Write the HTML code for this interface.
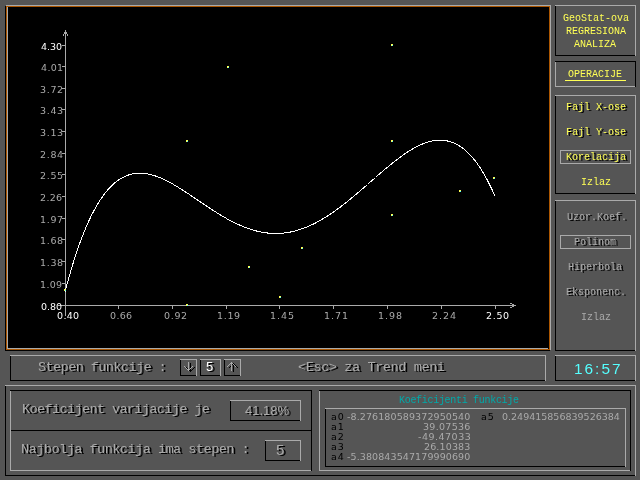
<!DOCTYPE html>
<html><head><meta charset="utf-8"><title>GeoStat - Regresiona analiza</title>
<style>
html,body{margin:0;padding:0}
body{width:640px;height:480px;background:#555555;position:relative;overflow:hidden}
.l{position:absolute;box-sizing:content-box}
.t{position:absolute;white-space:pre;line-height:1;margin:0;padding:0;will-change:transform}
svg{position:absolute;left:0;top:0}
.s{font-family:"Liberation Mono", monospace;font-size:10px;font-weight:normal}
.sf{font-family:"Liberation Mono", monospace;font-size:10px;font-weight:normal}
.n{font-family:"DejaVu Sans", "Liberation Sans", sans-serif;font-size:9.5px;font-weight:normal}
.m{font-family:"Liberation Mono", monospace;font-size:13.6px;font-weight:normal}
.mn{font-family:"Liberation Sans", sans-serif;font-size:13px;font-weight:normal}
.b{font-family:"Liberation Sans", sans-serif;font-size:15px;font-weight:normal}
.c{font-family:"Liberation Sans", sans-serif;font-size:15.4px;font-weight:normal}
</style></head>
<body>
<div class="g" id="graph-panel">
<div class="l" style="left:5px;top:5px;width:546px;height:346px;background:#000"></div>
<div class="l" style="left:6px;top:5px;width:545px;height:1px;background:#aaaaaa"></div>
<div class="l" style="left:550px;top:6px;width:1px;height:344px;background:#aaaaaa"></div>
<div class="l" style="left:5px;top:5px;width:1px;height:1px;background:#555555"></div>
<div class="l" style="left:550px;top:350px;width:1px;height:1px;background:#555555"></div>
<div class="l" style="left:6px;top:6px;width:542px;height:342px;border:1px solid #aa5500"></div>
<div class="l" style="left:7px;top:7px;width:1px;height:342px;background:#aaaaaa"></div>
<div class="l" style="left:8px;top:348px;width:540px;height:1px;background:#aaaaaa"></div>
<svg width="640" height="480" viewBox="0 0 640 480" shape-rendering="crispEdges">
<line x1="65.5" y1="30.5" x2="65.5" y2="315.5" stroke="#aaaaaa" stroke-width="1" stroke-linecap="square"/>
<line x1="58.5" y1="305.5" x2="515.5" y2="305.5" stroke="#aaaaaa" stroke-width="1" stroke-linecap="square"/>
<line x1="65.5" y1="30.5" x2="63.5" y2="35.5" stroke="#aaaaaa" stroke-width="1" stroke-linecap="square"/>
<line x1="65.5" y1="30.5" x2="67.5" y2="35.5" stroke="#aaaaaa" stroke-width="1" stroke-linecap="square"/>
<line x1="515.5" y1="305.5" x2="510.5" y2="303.5" stroke="#aaaaaa" stroke-width="1" stroke-linecap="square"/>
<line x1="515.5" y1="305.5" x2="510.5" y2="307.5" stroke="#aaaaaa" stroke-width="1" stroke-linecap="square"/>
<line x1="65.5" y1="305.5" x2="65.5" y2="308.5" stroke="#aaaaaa" stroke-width="1" stroke-linecap="square"/>
<line x1="118.5" y1="305.5" x2="118.5" y2="308.5" stroke="#aaaaaa" stroke-width="1" stroke-linecap="square"/>
<line x1="172.5" y1="305.5" x2="172.5" y2="308.5" stroke="#aaaaaa" stroke-width="1" stroke-linecap="square"/>
<line x1="226.5" y1="305.5" x2="226.5" y2="308.5" stroke="#aaaaaa" stroke-width="1" stroke-linecap="square"/>
<line x1="279.5" y1="305.5" x2="279.5" y2="308.5" stroke="#aaaaaa" stroke-width="1" stroke-linecap="square"/>
<line x1="333.5" y1="305.5" x2="333.5" y2="308.5" stroke="#aaaaaa" stroke-width="1" stroke-linecap="square"/>
<line x1="387.5" y1="305.5" x2="387.5" y2="308.5" stroke="#aaaaaa" stroke-width="1" stroke-linecap="square"/>
<line x1="441.5" y1="305.5" x2="441.5" y2="308.5" stroke="#aaaaaa" stroke-width="1" stroke-linecap="square"/>
<line x1="495.5" y1="305.5" x2="495.5" y2="308.5" stroke="#aaaaaa" stroke-width="1" stroke-linecap="square"/>
<line x1="62.5" y1="45.5" x2="65.5" y2="45.5" stroke="#aaaaaa" stroke-width="1" stroke-linecap="square"/>
<line x1="62.5" y1="66.5" x2="65.5" y2="66.5" stroke="#aaaaaa" stroke-width="1" stroke-linecap="square"/>
<line x1="62.5" y1="88.5" x2="65.5" y2="88.5" stroke="#aaaaaa" stroke-width="1" stroke-linecap="square"/>
<line x1="62.5" y1="109.5" x2="65.5" y2="109.5" stroke="#aaaaaa" stroke-width="1" stroke-linecap="square"/>
<line x1="62.5" y1="131.5" x2="65.5" y2="131.5" stroke="#aaaaaa" stroke-width="1" stroke-linecap="square"/>
<line x1="62.5" y1="153.5" x2="65.5" y2="153.5" stroke="#aaaaaa" stroke-width="1" stroke-linecap="square"/>
<line x1="62.5" y1="174.5" x2="65.5" y2="174.5" stroke="#aaaaaa" stroke-width="1" stroke-linecap="square"/>
<line x1="62.5" y1="196.5" x2="65.5" y2="196.5" stroke="#aaaaaa" stroke-width="1" stroke-linecap="square"/>
<line x1="62.5" y1="218.5" x2="65.5" y2="218.5" stroke="#aaaaaa" stroke-width="1" stroke-linecap="square"/>
<line x1="62.5" y1="239.5" x2="65.5" y2="239.5" stroke="#aaaaaa" stroke-width="1" stroke-linecap="square"/>
<line x1="62.5" y1="261.5" x2="65.5" y2="261.5" stroke="#aaaaaa" stroke-width="1" stroke-linecap="square"/>
<line x1="62.5" y1="283.5" x2="65.5" y2="283.5" stroke="#aaaaaa" stroke-width="1" stroke-linecap="square"/>
<line x1="62.5" y1="305.5" x2="65.5" y2="305.5" stroke="#aaaaaa" stroke-width="1" stroke-linecap="square"/>
<polyline points="65.0,292.1 65.5,290.1 66.0,288.2 66.5,286.3 67.0,284.5 67.5,282.6 68.0,280.8 68.5,279.0 69.0,277.2 69.5,275.4 70.0,273.7 70.5,272.0 71.0,270.3 71.5,268.6 72.0,266.9 72.5,265.2 73.0,263.6 73.5,262.0 74.0,260.4 74.5,258.8 75.0,257.3 75.5,255.7 76.0,254.2 76.5,252.7 77.0,251.2 77.5,249.7 78.0,248.3 78.5,246.8 79.0,245.4 79.5,244.0 80.0,242.6 80.5,241.3 81.0,239.9 81.5,238.6 82.0,237.3 82.5,236.0 83.0,234.7 83.5,233.4 84.0,232.2 84.5,231.0 85.0,229.7 85.5,228.5 86.0,227.4 86.5,226.2 87.0,225.0 87.5,223.9 88.0,222.8 88.5,221.7 89.0,220.6 89.5,219.5 90.0,218.5 90.5,217.4 91.0,216.4 91.5,215.4 92.0,214.4 92.5,213.4 93.0,212.4 93.5,211.5 94.0,210.5 94.5,209.6 95.0,208.7 95.5,207.8 96.0,206.9 96.5,206.0 97.0,205.2 97.5,204.3 98.0,203.5 98.5,202.7 99.0,201.9 99.5,201.1 100.0,200.3 100.5,199.6 101.0,198.8 101.5,198.1 102.0,197.4 102.5,196.6 103.0,195.9 103.5,195.3 104.0,194.6 104.5,193.9 105.0,193.3 105.5,192.6 106.0,192.0 106.5,191.4 107.0,190.8 107.5,190.2 108.0,189.6 108.5,189.1 109.0,188.5 109.5,188.0 110.0,187.4 110.5,186.9 111.0,186.4 111.5,185.9 112.0,185.4 112.5,185.0 113.0,184.5 113.5,184.0 114.0,183.6 114.5,183.2 115.0,182.7 115.5,182.3 116.0,181.9 116.5,181.5 117.0,181.2 117.5,180.8 118.0,180.4 118.5,180.1 119.0,179.7 119.5,179.4 120.0,179.1 120.5,178.8 121.0,178.5 121.5,178.2 122.0,177.9 122.5,177.6 123.0,177.3 123.5,177.1 124.0,176.8 124.5,176.6 125.0,176.4 125.5,176.2 126.0,175.9 126.5,175.7 127.0,175.5 127.5,175.4 128.0,175.2 128.5,175.0 129.0,174.8 129.5,174.7 130.0,174.5 130.5,174.4 131.0,174.3 131.5,174.2 132.0,174.0 132.5,173.9 133.0,173.8 133.5,173.7 134.0,173.7 134.5,173.6 135.0,173.5 135.5,173.4 136.0,173.4 136.5,173.3 137.0,173.3 137.5,173.3 138.0,173.2 138.5,173.2 139.0,173.2 139.5,173.2 140.0,173.2 140.5,173.2 141.0,173.2 141.5,173.2 142.0,173.3 142.5,173.3 143.0,173.3 143.5,173.4 144.0,173.4 144.5,173.5 145.0,173.5 145.5,173.6 146.0,173.7 146.5,173.7 147.0,173.8 147.5,173.9 148.0,174.0 148.5,174.1 149.0,174.2 149.5,174.3 150.0,174.4 150.5,174.6 151.0,174.7 151.5,174.8 152.0,174.9 152.5,175.1 153.0,175.2 153.5,175.4 154.0,175.5 154.5,175.7 155.0,175.9 155.5,176.0 156.0,176.2 156.5,176.4 157.0,176.6 157.5,176.7 158.0,176.9 158.5,177.1 159.0,177.3 159.5,177.5 160.0,177.7 160.5,177.9 161.0,178.1 161.5,178.4 162.0,178.6 162.5,178.8 163.0,179.0 163.5,179.3 164.0,179.5 164.5,179.7 165.0,180.0 165.5,180.2 166.0,180.4 166.5,180.7 167.0,181.0 167.5,181.2 168.0,181.5 168.5,181.7 169.0,182.0 169.5,182.3 170.0,182.5 170.5,182.8 171.0,183.1 171.5,183.3 172.0,183.6 172.5,183.9 173.0,184.2 173.5,184.5 174.0,184.8 174.5,185.1 175.0,185.4 175.5,185.7 176.0,185.9 176.5,186.2 177.0,186.5 177.5,186.9 178.0,187.2 178.5,187.5 179.0,187.8 179.5,188.1 180.0,188.4 180.5,188.7 181.0,189.0 181.5,189.3 182.0,189.7 182.5,190.0 183.0,190.3 183.5,190.6 184.0,190.9 184.5,191.3 185.0,191.6 185.5,191.9 186.0,192.3 186.5,192.6 187.0,192.9 187.5,193.2 188.0,193.6 188.5,193.9 189.0,194.2 189.5,194.6 190.0,194.9 190.5,195.2 191.0,195.6 191.5,195.9 192.0,196.3 192.5,196.6 193.0,196.9 193.5,197.3 194.0,197.6 194.5,197.9 195.0,198.3 195.5,198.6 196.0,199.0 196.5,199.3 197.0,199.6 197.5,200.0 198.0,200.3 198.5,200.7 199.0,201.0 199.5,201.3 200.0,201.7 200.5,202.0 201.0,202.4 201.5,202.7 202.0,203.0 202.5,203.4 203.0,203.7 203.5,204.1 204.0,204.4 204.5,204.7 205.0,205.1 205.5,205.4 206.0,205.7 206.5,206.1 207.0,206.4 207.5,206.7 208.0,207.1 208.5,207.4 209.0,207.7 209.5,208.1 210.0,208.4 210.5,208.7 211.0,209.0 211.5,209.4 212.0,209.7 212.5,210.0 213.0,210.3 213.5,210.7 214.0,211.0 214.5,211.3 215.0,211.6 215.5,211.9 216.0,212.2 216.5,212.6 217.0,212.9 217.5,213.2 218.0,213.5 218.5,213.8 219.0,214.1 219.5,214.4 220.0,214.7 220.5,215.0 221.0,215.3 221.5,215.6 222.0,215.9 222.5,216.2 223.0,216.5 223.5,216.8 224.0,217.1 224.5,217.4 225.0,217.7 225.5,217.9 226.0,218.2 226.5,218.5 227.0,218.8 227.5,219.1 228.0,219.3 228.5,219.6 229.0,219.9 229.5,220.1 230.0,220.4 230.5,220.7 231.0,220.9 231.5,221.2 232.0,221.5 232.5,221.7 233.0,222.0 233.5,222.2 234.0,222.5 234.5,222.7 235.0,223.0 235.5,223.2 236.0,223.4 236.5,223.7 237.0,223.9 237.5,224.1 238.0,224.4 238.5,224.6 239.0,224.8 239.5,225.0 240.0,225.3 240.5,225.5 241.0,225.7 241.5,225.9 242.0,226.1 242.5,226.3 243.0,226.5 243.5,226.7 244.0,226.9 244.5,227.1 245.0,227.3 245.5,227.5 246.0,227.7 246.5,227.9 247.0,228.1 247.5,228.2 248.0,228.4 248.5,228.6 249.0,228.8 249.5,228.9 250.0,229.1 250.5,229.3 251.0,229.4 251.5,229.6 252.0,229.7 252.5,229.9 253.0,230.0 253.5,230.2 254.0,230.3 254.5,230.5 255.0,230.6 255.5,230.7 256.0,230.9 256.5,231.0 257.0,231.1 257.5,231.2 258.0,231.3 258.5,231.5 259.0,231.6 259.5,231.7 260.0,231.8 260.5,231.9 261.0,232.0 261.5,232.1 262.0,232.2 262.5,232.3 263.0,232.3 263.5,232.4 264.0,232.5 264.5,232.6 265.0,232.7 265.5,232.7 266.0,232.8 266.5,232.9 267.0,232.9 267.5,233.0 268.0,233.0 268.5,233.1 269.0,233.1 269.5,233.2 270.0,233.2 270.5,233.2 271.0,233.3 271.5,233.3 272.0,233.3 272.5,233.4 273.0,233.4 273.5,233.4 274.0,233.4 274.5,233.4 275.0,233.4 275.5,233.4 276.0,233.4 276.5,233.4 277.0,233.4 277.5,233.4 278.0,233.4 278.5,233.4 279.0,233.4 279.5,233.3 280.0,233.3 280.5,233.3 281.0,233.2 281.5,233.2 282.0,233.2 282.5,233.1 283.0,233.1 283.5,233.0 284.0,233.0 284.5,232.9 285.0,232.8 285.5,232.8 286.0,232.7 286.5,232.6 287.0,232.6 287.5,232.5 288.0,232.4 288.5,232.3 289.0,232.2 289.5,232.2 290.0,232.1 290.5,232.0 291.0,231.9 291.5,231.8 292.0,231.6 292.5,231.5 293.0,231.4 293.5,231.3 294.0,231.2 294.5,231.1 295.0,230.9 295.5,230.8 296.0,230.7 296.5,230.5 297.0,230.4 297.5,230.2 298.0,230.1 298.5,229.9 299.0,229.8 299.5,229.6 300.0,229.5 300.5,229.3 301.0,229.1 301.5,229.0 302.0,228.8 302.5,228.6 303.0,228.5 303.5,228.3 304.0,228.1 304.5,227.9 305.0,227.7 305.5,227.5 306.0,227.3 306.5,227.1 307.0,226.9 307.5,226.7 308.0,226.5 308.5,226.3 309.0,226.1 309.5,225.8 310.0,225.6 310.5,225.4 311.0,225.2 311.5,224.9 312.0,224.7 312.5,224.5 313.0,224.2 313.5,224.0 314.0,223.7 314.5,223.5 315.0,223.2 315.5,223.0 316.0,222.7 316.5,222.4 317.0,222.2 317.5,221.9 318.0,221.6 318.5,221.4 319.0,221.1 319.5,220.8 320.0,220.5 320.5,220.3 321.0,220.0 321.5,219.7 322.0,219.4 322.5,219.1 323.0,218.8 323.5,218.5 324.0,218.2 324.5,217.9 325.0,217.6 325.5,217.3 326.0,217.0 326.5,216.6 327.0,216.3 327.5,216.0 328.0,215.7 328.5,215.4 329.0,215.0 329.5,214.7 330.0,214.4 330.5,214.0 331.0,213.7 331.5,213.4 332.0,213.0 332.5,212.7 333.0,212.3 333.5,212.0 334.0,211.6 334.5,211.3 335.0,210.9 335.5,210.6 336.0,210.2 336.5,209.8 337.0,209.5 337.5,209.1 338.0,208.7 338.5,208.4 339.0,208.0 339.5,207.6 340.0,207.3 340.5,206.9 341.0,206.5 341.5,206.1 342.0,205.7 342.5,205.4 343.0,205.0 343.5,204.6 344.0,204.2 344.5,203.8 345.0,203.4 345.5,203.0 346.0,202.6 346.5,202.2 347.0,201.8 347.5,201.4 348.0,201.0 348.5,200.6 349.0,200.2 349.5,199.8 350.0,199.4 350.5,199.0 351.0,198.6 351.5,198.2 352.0,197.7 352.5,197.3 353.0,196.9 353.5,196.5 354.0,196.1 354.5,195.7 355.0,195.2 355.5,194.8 356.0,194.4 356.5,194.0 357.0,193.5 357.5,193.1 358.0,192.7 358.5,192.3 359.0,191.8 359.5,191.4 360.0,191.0 360.5,190.6 361.0,190.1 361.5,189.7 362.0,189.3 362.5,188.8 363.0,188.4 363.5,188.0 364.0,187.5 364.5,187.1 365.0,186.6 365.5,186.2 366.0,185.8 366.5,185.3 367.0,184.9 367.5,184.5 368.0,184.0 368.5,183.6 369.0,183.2 369.5,182.7 370.0,182.3 370.5,181.8 371.0,181.4 371.5,181.0 372.0,180.5 372.5,180.1 373.0,179.6 373.5,179.2 374.0,178.8 374.5,178.3 375.0,177.9 375.5,177.5 376.0,177.0 376.5,176.6 377.0,176.1 377.5,175.7 378.0,175.3 378.5,174.8 379.0,174.4 379.5,174.0 380.0,173.5 380.5,173.1 381.0,172.7 381.5,172.3 382.0,171.8 382.5,171.4 383.0,171.0 383.5,170.5 384.0,170.1 384.5,169.7 385.0,169.3 385.5,168.8 386.0,168.4 386.5,168.0 387.0,167.6 387.5,167.2 388.0,166.8 388.5,166.3 389.0,165.9 389.5,165.5 390.0,165.1 390.5,164.7 391.0,164.3 391.5,163.9 392.0,163.5 392.5,163.1 393.0,162.7 393.5,162.3 394.0,161.9 394.5,161.5 395.0,161.1 395.5,160.7 396.0,160.3 396.5,159.9 397.0,159.6 397.5,159.2 398.0,158.8 398.5,158.4 399.0,158.0 399.5,157.7 400.0,157.3 400.5,156.9 401.0,156.6 401.5,156.2 402.0,155.8 402.5,155.5 403.0,155.1 403.5,154.8 404.0,154.4 404.5,154.1 405.0,153.8 405.5,153.4 406.0,153.1 406.5,152.7 407.0,152.4 407.5,152.1 408.0,151.8 408.5,151.4 409.0,151.1 409.5,150.8 410.0,150.5 410.5,150.2 411.0,149.9 411.5,149.6 412.0,149.3 412.5,149.0 413.0,148.7 413.5,148.4 414.0,148.1 414.5,147.9 415.0,147.6 415.5,147.3 416.0,147.1 416.5,146.8 417.0,146.5 417.5,146.3 418.0,146.0 418.5,145.8 419.0,145.5 419.5,145.3 420.0,145.1 420.5,144.9 421.0,144.6 421.5,144.4 422.0,144.2 422.5,144.0 423.0,143.8 423.5,143.6 424.0,143.4 424.5,143.2 425.0,143.0 425.5,142.9 426.0,142.7 426.5,142.5 427.0,142.3 427.5,142.2 428.0,142.0 428.5,141.9 429.0,141.8 429.5,141.6 430.0,141.5 430.5,141.4 431.0,141.2 431.5,141.1 432.0,141.0 432.5,140.9 433.0,140.8 433.5,140.7 434.0,140.7 434.5,140.6 435.0,140.5 435.5,140.5 436.0,140.4 436.5,140.3 437.0,140.3 437.5,140.3 438.0,140.2 438.5,140.2 439.0,140.2 439.5,140.2 440.0,140.2 440.5,140.2 441.0,140.2 441.5,140.2 442.0,140.2 442.5,140.3 443.0,140.3 443.5,140.3 444.0,140.4 444.5,140.4 445.0,140.5 445.5,140.6 446.0,140.7 446.5,140.8 447.0,140.9 447.5,141.0 448.0,141.1 448.5,141.2 449.0,141.3 449.5,141.5 450.0,141.6 450.5,141.8 451.0,141.9 451.5,142.1 452.0,142.3 452.5,142.5 453.0,142.7 453.5,142.9 454.0,143.1 454.5,143.3 455.0,143.5 455.5,143.8 456.0,144.0 456.5,144.3 457.0,144.5 457.5,144.8 458.0,145.1 458.5,145.4 459.0,145.7 459.5,146.0 460.0,146.3 460.5,146.6 461.0,147.0 461.5,147.3 462.0,147.7 462.5,148.1 463.0,148.4 463.5,148.8 464.0,149.2 464.5,149.6 465.0,150.0 465.5,150.5 466.0,150.9 466.5,151.4 467.0,151.8 467.5,152.3 468.0,152.8 468.5,153.3 469.0,153.8 469.5,154.3 470.0,154.8 470.5,155.3 471.0,155.9 471.5,156.4 472.0,157.0 472.5,157.6 473.0,158.2 473.5,158.8 474.0,159.4 474.5,160.0 475.0,160.6 475.5,161.3 476.0,161.9 476.5,162.6 477.0,163.3 477.5,164.0 478.0,164.7 478.5,165.4 479.0,166.1 479.5,166.9 480.0,167.6 480.5,168.4 481.0,169.2 481.5,170.0 482.0,170.8 482.5,171.6 483.0,172.4 483.5,173.3 484.0,174.1 484.5,175.0 485.0,175.9 485.5,176.8 486.0,177.7 486.5,178.6 487.0,179.5 487.5,180.5 488.0,181.4 488.5,182.4 489.0,183.4 489.5,184.4 490.0,185.4 490.5,186.4 491.0,187.5 491.5,188.5 492.0,189.6 492.5,190.7 493.0,191.8 493.5,192.9 494.0,194.0 494.5,195.2 495.0,196.3" fill="none" stroke="#ffffff" stroke-width="1"/>
<rect x="227" y="66" width="2" height="2" fill="#ffff55"/><rect x="228" y="67" width="1" height="1" fill="#55ffff"/>
<rect x="186" y="140" width="2" height="2" fill="#ffff55"/><rect x="187" y="141" width="1" height="1" fill="#55ffff"/>
<rect x="391" y="44" width="2" height="2" fill="#ffff55"/><rect x="392" y="45" width="1" height="1" fill="#55ffff"/>
<rect x="391" y="140" width="2" height="2" fill="#ffff55"/><rect x="392" y="141" width="1" height="1" fill="#55ffff"/>
<rect x="391" y="214" width="2" height="2" fill="#ffff55"/><rect x="392" y="215" width="1" height="1" fill="#55ffff"/>
<rect x="459" y="190" width="2" height="2" fill="#ffff55"/><rect x="460" y="191" width="1" height="1" fill="#55ffff"/>
<rect x="493" y="177" width="2" height="2" fill="#ffff55"/><rect x="494" y="178" width="1" height="1" fill="#55ffff"/>
<rect x="301" y="247" width="2" height="2" fill="#ffff55"/><rect x="302" y="248" width="1" height="1" fill="#55ffff"/>
<rect x="248" y="266" width="2" height="2" fill="#ffff55"/><rect x="249" y="267" width="1" height="1" fill="#55ffff"/>
<rect x="279" y="296" width="2" height="2" fill="#ffff55"/><rect x="280" y="297" width="1" height="1" fill="#55ffff"/>
<rect x="186" y="304" width="2" height="2" fill="#ffff55"/><rect x="187" y="305" width="1" height="1" fill="#55ffff"/>
<rect x="64" y="289" width="2" height="2" fill="#ffff55"/><rect x="65" y="290" width="1" height="1" fill="#55ffff"/>
</svg>
<div class="t n" style="left:41px;top:42px;color:#ffffff">4.30</div>
<div class="t n" style="left:41px;top:63px;color:#aaaaaa;letter-spacing:0.333px">4.01</div>
<div class="t n" style="left:40px;top:85px;color:#aaaaaa;letter-spacing:0.667px">3.72</div>
<div class="t n" style="left:40px;top:106px;color:#aaaaaa;letter-spacing:0.667px">3.43</div>
<div class="t n" style="left:40px;top:128px;color:#aaaaaa;letter-spacing:0.667px">3.13</div>
<div class="t n" style="left:40px;top:150px;color:#aaaaaa;letter-spacing:0.667px">2.84</div>
<div class="t n" style="left:40px;top:171px;color:#aaaaaa;letter-spacing:0.667px">2.55</div>
<div class="t n" style="left:40px;top:193px;color:#aaaaaa;letter-spacing:0.333px">2.26</div>
<div class="t n" style="left:40px;top:215px;color:#aaaaaa;letter-spacing:0.667px">1.97</div>
<div class="t n" style="left:40px;top:236px;color:#aaaaaa;letter-spacing:0.667px">1.68</div>
<div class="t n" style="left:40px;top:258px;color:#aaaaaa;letter-spacing:0.667px">1.38</div>
<div class="t n" style="left:40px;top:280px;color:#aaaaaa;letter-spacing:0.333px">1.09</div>
<div class="t n" style="left:41px;top:302px;color:#ffffff">0.80</div>
<div class="t n" style="left:57px;top:311px;color:#ffffff;letter-spacing:0.333px">0.40</div>
<div class="t n" style="left:110px;top:311px;color:#aaaaaa;letter-spacing:0.333px">0.66</div>
<div class="t n" style="left:164px;top:311px;color:#aaaaaa;letter-spacing:0.667px">0.92</div>
<div class="t n" style="left:217px;top:311px;color:#aaaaaa;letter-spacing:0.667px">1.19</div>
<div class="t n" style="left:270px;top:311px;color:#aaaaaa;letter-spacing:1.000px">1.45</div>
<div class="t n" style="left:324px;top:311px;color:#aaaaaa;letter-spacing:1.000px">1.71</div>
<div class="t n" style="left:378px;top:311px;color:#aaaaaa;letter-spacing:1.000px">1.98</div>
<div class="t n" style="left:432px;top:311px;color:#aaaaaa;letter-spacing:1.000px">2.24</div>
<div class="t n" style="left:486px;top:311px;color:#ffffff;letter-spacing:0.667px">2.50</div>
</div>
<div class="g" id="title-panel">
<div class="l" style="left:555px;top:5px;width:81px;height:1px;background:#aaaaaa"></div>
<div class="l" style="left:635px;top:6px;width:1px;height:50px;background:#aaaaaa"></div>
<div class="l" style="left:555px;top:6px;width:1px;height:50px;background:#000000"></div>
<div class="l" style="left:556px;top:55px;width:79px;height:1px;background:#000000"></div>
<div class="t s" style="left:563px;top:14px;color:#ffff55">GeoStat-ova</div>
<div class="t s" style="left:566px;top:27px;color:#ffff55">REGRESIONA</div>
<div class="t s" style="left:574px;top:40px;color:#ffff55">ANALIZA</div>
</div>
<div class="g" id="operations-header">
<div class="l" style="left:555px;top:61px;width:81px;height:1px;background:#000000"></div>
<div class="l" style="left:635px;top:62px;width:1px;height:25px;background:#000000"></div>
<div class="l" style="left:555px;top:62px;width:1px;height:25px;background:#aaaaaa"></div>
<div class="l" style="left:556px;top:86px;width:79px;height:1px;background:#aaaaaa"></div>
<div class="t s" style="left:568px;top:70px;color:#ffff55">OPERACIJE</div>
<div class="l" style="left:565px;top:80px;width:61px;height:1px;background:#ffff55"></div>
</div>
<div class="g" id="operations-menu">
<div class="l" style="left:555px;top:95px;width:81px;height:1px;background:#aaaaaa"></div>
<div class="l" style="left:635px;top:96px;width:1px;height:98px;background:#aaaaaa"></div>
<div class="l" style="left:555px;top:96px;width:1px;height:98px;background:#000000"></div>
<div class="l" style="left:556px;top:193px;width:79px;height:1px;background:#000000"></div>
<div class="t s" style="left:566px;top:103px;color:#ffff55;text-shadow:2px 1px 0 #000">Fajl X-ose</div>
<div class="t s" style="left:566px;top:128px;color:#ffff55;text-shadow:2px 1px 0 #000">Fajl Y-ose</div>
<div class="l" style="left:560px;top:150px;width:69px;height:12px;border:1px solid #aaaaaa"></div>
<div class="t s" style="left:566px;top:153px;color:#ffff55;text-shadow:2px 1px 0 #000">Korelacija</div>
<div class="t s" style="left:581px;top:178px;color:#ffff55">Izlaz</div>
</div>
<div class="g" id="trend-menu">
<div class="l" style="left:555px;top:200px;width:81px;height:1px;background:#aaaaaa"></div>
<div class="l" style="left:635px;top:201px;width:1px;height:150px;background:#aaaaaa"></div>
<div class="l" style="left:555px;top:201px;width:1px;height:150px;background:#000000"></div>
<div class="l" style="left:556px;top:350px;width:79px;height:1px;background:#000000"></div>
<div class="t s" style="left:567px;top:213px;color:#aaaaaa;text-shadow:2px 1px 0 #000">Uzor.Koef.</div>
<div class="l" style="left:560px;top:235px;width:69px;height:12px;border:1px solid #aaaaaa"></div>
<div class="t s" style="left:574px;top:238px;color:#aaaaaa;text-shadow:2px 1px 0 #000">Polinom</div>
<div class="t s" style="left:568px;top:263px;color:#aaaaaa;text-shadow:2px 1px 0 #000">Hiperbola</div>
<div class="t s" style="left:566px;top:288px;color:#aaaaaa;text-shadow:2px 1px 0 #000">Eksponenc.</div>
<div class="t s" style="left:581px;top:313px;color:#aaaaaa">Izlaz</div>
</div>
<div class="g" id="clock">
<div class="l" style="left:555px;top:355px;width:81px;height:1px;background:#aaaaaa"></div>
<div class="l" style="left:635px;top:356px;width:1px;height:25px;background:#aaaaaa"></div>
<div class="l" style="left:555px;top:356px;width:1px;height:25px;background:#000000"></div>
<div class="l" style="left:556px;top:380px;width:79px;height:1px;background:#000000"></div>
<div class="t c" style="left:574px;top:361px;color:#55ffff;letter-spacing:2.000px">16:57</div>
</div>
<div class="g" id="degree-bar">
<div class="l" style="left:10px;top:355px;width:536px;height:1px;background:#aaaaaa"></div>
<div class="l" style="left:545px;top:356px;width:1px;height:25px;background:#aaaaaa"></div>
<div class="l" style="left:10px;top:356px;width:1px;height:25px;background:#000000"></div>
<div class="l" style="left:11px;top:380px;width:534px;height:1px;background:#000000"></div>
<div class="t m" style="left:38px;top:361px;color:#aaaaaa;letter-spacing:-0.625px;text-shadow:2px 1px 0 #000">Stepen funkcije :</div>
<div class="l" style="left:180px;top:359px;width:17px;height:1px;background:#aaaaaa"></div>
<div class="l" style="left:196px;top:360px;width:1px;height:16px;background:#aaaaaa"></div>
<div class="l" style="left:180px;top:360px;width:1px;height:16px;background:#000000"></div>
<div class="l" style="left:181px;top:375px;width:15px;height:1px;background:#000000"></div>
<div class="l" style="left:200px;top:359px;width:21px;height:1px;background:#aaaaaa"></div>
<div class="l" style="left:220px;top:360px;width:1px;height:16px;background:#aaaaaa"></div>
<div class="l" style="left:200px;top:360px;width:1px;height:16px;background:#000000"></div>
<div class="l" style="left:201px;top:375px;width:19px;height:1px;background:#000000"></div>
<div class="l" style="left:224px;top:359px;width:17px;height:1px;background:#aaaaaa"></div>
<div class="l" style="left:240px;top:360px;width:1px;height:16px;background:#aaaaaa"></div>
<div class="l" style="left:224px;top:360px;width:1px;height:16px;background:#000000"></div>
<div class="l" style="left:225px;top:375px;width:15px;height:1px;background:#000000"></div>
<svg width="640" height="480" viewBox="0 0 640 480" shape-rendering="crispEdges">
<line x1="190.5" y1="363.5" x2="190.5" y2="371.5" stroke="#000000" stroke-width="1" stroke-linecap="square"/>
<line x1="186.5" y1="367.5" x2="190.5" y2="371.5" stroke="#000000" stroke-width="1" stroke-linecap="square"/>
<line x1="194.5" y1="367.5" x2="190.5" y2="371.5" stroke="#000000" stroke-width="1" stroke-linecap="square"/>
<line x1="188.5" y1="362.5" x2="188.5" y2="370.5" stroke="#aaaaaa" stroke-width="1" stroke-linecap="square"/>
<line x1="184.5" y1="366.5" x2="188.5" y2="370.5" stroke="#aaaaaa" stroke-width="1" stroke-linecap="square"/>
<line x1="192.5" y1="366.5" x2="188.5" y2="370.5" stroke="#aaaaaa" stroke-width="1" stroke-linecap="square"/>
<line x1="233.5" y1="363.5" x2="233.5" y2="371.5" stroke="#000000" stroke-width="1" stroke-linecap="square"/>
<line x1="233.5" y1="363.5" x2="229.5" y2="367.5" stroke="#000000" stroke-width="1" stroke-linecap="square"/>
<line x1="233.5" y1="363.5" x2="237.5" y2="367.5" stroke="#000000" stroke-width="1" stroke-linecap="square"/>
<line x1="231.5" y1="362.5" x2="231.5" y2="370.5" stroke="#aaaaaa" stroke-width="1" stroke-linecap="square"/>
<line x1="231.5" y1="362.5" x2="227.5" y2="366.5" stroke="#aaaaaa" stroke-width="1" stroke-linecap="square"/>
<line x1="231.5" y1="362.5" x2="235.5" y2="366.5" stroke="#aaaaaa" stroke-width="1" stroke-linecap="square"/>
</svg>
<div class="t mn" style="left:206px;top:360px;color:#ffffff;text-shadow:2px 1px 0 #000">5</div>
<div class="t m" style="left:298px;top:361px;color:#aaaaaa;letter-spacing:-0.444px;text-shadow:2px 1px 0 #000">&lt;Esc&gt; za Trend meni</div>
</div>
<div class="g" id="results-panel">
<div class="l" style="left:5px;top:385px;width:631px;height:1px;background:#aaaaaa"></div>
<div class="l" style="left:635px;top:386px;width:1px;height:90px;background:#aaaaaa"></div>
<div class="l" style="left:5px;top:386px;width:1px;height:90px;background:#000000"></div>
<div class="l" style="left:6px;top:475px;width:629px;height:1px;background:#000000"></div>
<div class="g" id="results-stats">
<div class="l" style="left:10px;top:390px;width:302px;height:1px;background:#000000"></div>
<div class="l" style="left:311px;top:391px;width:1px;height:80px;background:#000000"></div>
<div class="l" style="left:10px;top:391px;width:1px;height:80px;background:#aaaaaa"></div>
<div class="l" style="left:11px;top:470px;width:300px;height:1px;background:#aaaaaa"></div>
<div class="l" style="left:11px;top:430px;width:300px;height:1px;background:#000000"></div>
<div class="t m" style="left:22px;top:403px;color:#aaaaaa;letter-spacing:-0.667px;text-shadow:2px 1px 0 #000">Koeficijent varijacije je</div>
<div class="l" style="left:230px;top:400px;width:71px;height:1px;background:#aaaaaa"></div>
<div class="l" style="left:300px;top:401px;width:1px;height:20px;background:#aaaaaa"></div>
<div class="l" style="left:230px;top:401px;width:1px;height:20px;background:#000000"></div>
<div class="l" style="left:231px;top:420px;width:69px;height:1px;background:#000000"></div>
<div class="t mn" style="left:245px;top:404px;color:#aaaaaa;text-shadow:2px 1px 0 #000">41.18%</div>
<div class="t m" style="left:21px;top:443px;color:#aaaaaa;letter-spacing:-0.552px;text-shadow:2px 1px 0 #000">Najbolja funkcija ima stepen :</div>
<div class="l" style="left:265px;top:440px;width:36px;height:1px;background:#aaaaaa"></div>
<div class="l" style="left:300px;top:441px;width:1px;height:20px;background:#aaaaaa"></div>
<div class="l" style="left:265px;top:441px;width:1px;height:20px;background:#000000"></div>
<div class="l" style="left:266px;top:460px;width:34px;height:1px;background:#000000"></div>
<div class="t b" style="left:276px;top:442px;color:#aaaaaa;text-shadow:2px 1px 0 #000">5</div>
</div>
<div class="g" id="results-coefficients">
<div class="l" style="left:319px;top:390px;width:312px;height:1px;background:#000000"></div>
<div class="l" style="left:630px;top:391px;width:1px;height:80px;background:#000000"></div>
<div class="l" style="left:319px;top:391px;width:1px;height:80px;background:#aaaaaa"></div>
<div class="l" style="left:320px;top:470px;width:310px;height:1px;background:#aaaaaa"></div>
<div class="t sf" style="left:399px;top:396px;color:#00aaaa;letter-spacing:-0.300px">Koeficijenti funkcije</div>
<div class="l" style="left:325px;top:408px;width:301px;height:1px;background:#aaaaaa"></div>
<div class="l" style="left:625px;top:409px;width:1px;height:58px;background:#aaaaaa"></div>
<div class="l" style="left:325px;top:409px;width:1px;height:58px;background:#000000"></div>
<div class="l" style="left:326px;top:466px;width:299px;height:1px;background:#000000"></div>
<div class="t n" style="left:331px;top:412px;color:#000000;letter-spacing:1.000px">a0</div>
<div class="t n" style="left:347px;top:412px;color:#aaaaaa;letter-spacing:0.100px">-8.276180589372950540</div>
<div class="t n" style="left:331px;top:422px;color:#000000;letter-spacing:1.000px">a1</div>
<div class="t n" style="left:423px;top:422px;color:#aaaaaa;letter-spacing:0.286px">39.07536</div>
<div class="t n" style="left:331px;top:432px;color:#000000;letter-spacing:1.000px">a2</div>
<div class="t n" style="left:418px;top:432px;color:#aaaaaa;letter-spacing:0.500px">-49.47033</div>
<div class="t n" style="left:331px;top:442px;color:#000000;letter-spacing:1.000px">a3</div>
<div class="t n" style="left:424px;top:442px;color:#aaaaaa;letter-spacing:0.143px">26.10383</div>
<div class="t n" style="left:331px;top:452px;color:#000000;letter-spacing:1.000px">a4</div>
<div class="t n" style="left:347px;top:452px;color:#aaaaaa;letter-spacing:0.100px">-5.380843547179990690</div>
<div class="t n" style="left:481px;top:412px;color:#000000;letter-spacing:1.000px">a5</div>
<div class="t n" style="left:502px;top:412px;color:#aaaaaa">0.249415856839526384</div>
</div>
</div>
</body></html>
